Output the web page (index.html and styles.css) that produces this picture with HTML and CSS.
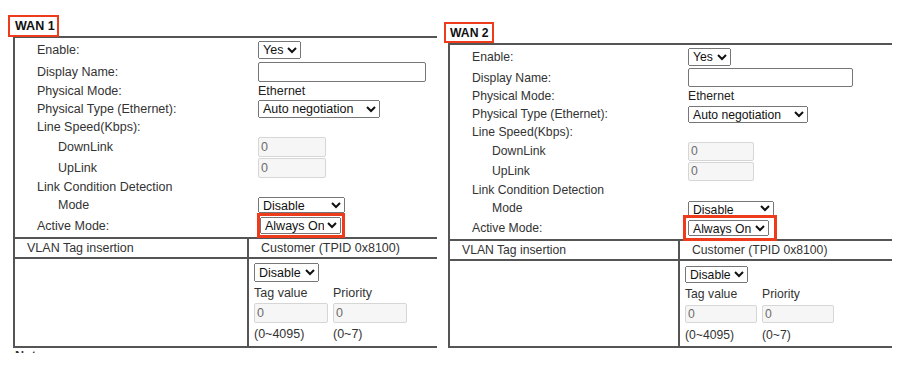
FILE: index.html
```html
<!DOCTYPE html>
<html lang="en">
<head>
<meta charset="utf-8">
<title>WAN settings</title>
<link rel="stylesheet" href="styles.css">
</head>
<body>
<div class="page">
  <section class="wan wan--1">
    <div class="wan-title">WAN 1</div>
    <div class="wan-table">
      <div class="settings">
        <div class="row r1"><span class="lbl">Enable:</span><span class="val"><select class="sel sel-yes"><option>Yes</option></select></span></div>
        <div class="row r2"><span class="lbl">Display Name:</span><span class="val"><input class="txt txt-name" type="text"></span></div>
        <div class="row r3"><span class="lbl">Physical Mode:</span><span class="val">Ethernet</span></div>
        <div class="row r4"><span class="lbl">Physical Type (Ethernet):</span><span class="val"><select class="sel sel-phys"><option>Auto negotiation</option></select></span></div>
        <div class="row r5"><span class="lbl">Line Speed(Kbps):</span></div>
        <div class="row r6"><span class="lbl ind">DownLink</span><span class="val"><input class="txt txt-speed" type="text" value="0" disabled></span></div>
        <div class="row r7"><span class="lbl ind">UpLink</span><span class="val"><input class="txt txt-speed" type="text" value="0" disabled></span></div>
        <div class="row r8"><span class="lbl">Link Condition Detection</span></div>
        <div class="row r9"><span class="lbl ind">Mode</span><span class="val"><select class="sel sel-mode"><option>Disable</option></select></span></div>
        <div class="row r10"><span class="lbl">Active Mode:</span><span class="val"><span class="hl"><select class="sel sel-active"><option>Always On</option></select></span></span></div>
      </div>
      <div class="vlan vlan-head">
        <div class="vcell vcell-l">VLAN Tag insertion</div>
        <div class="vcell vcell-r">Customer (TPID 0x8100)</div>
      </div>
      <div class="vlan vlan-body">
        <div class="vcell vcell-l"></div>
        <div class="vcell vcell-r">
          <div class="tag-grid">
            <div class="tg-sel"><select class="sel sel-vlan"><option>Disable</option></select></div>
            <div class="tg-lbl">Tag value</div>
            <div class="tg-lbl">Priority</div>
            <div class="tg-in"><input class="txt txt-tag" type="text" value="0" disabled></div>
            <div class="tg-in"><input class="txt txt-tag" type="text" value="0" disabled></div>
            <div class="tg-range">(0~4095)</div>
            <div class="tg-range">(0~7)</div>
          </div>
        </div>
      </div>
    </div>
    <div class="note">Note:</div>
  </section>

  <section class="wan wan--2">
    <div class="wan-title">WAN 2</div>
    <div class="wan-table">
      <div class="settings">
        <div class="row r1"><span class="lbl">Enable:</span><span class="val"><select class="sel sel-yes"><option>Yes</option></select></span></div>
        <div class="row r2"><span class="lbl">Display Name:</span><span class="val"><input class="txt txt-name" type="text"></span></div>
        <div class="row r3"><span class="lbl">Physical Mode:</span><span class="val">Ethernet</span></div>
        <div class="row r4"><span class="lbl">Physical Type (Ethernet):</span><span class="val"><select class="sel sel-phys"><option>Auto negotiation</option></select></span></div>
        <div class="row r5"><span class="lbl">Line Speed(Kbps):</span></div>
        <div class="row r6"><span class="lbl ind">DownLink</span><span class="val"><input class="txt txt-speed" type="text" value="0" disabled></span></div>
        <div class="row r7"><span class="lbl ind">UpLink</span><span class="val"><input class="txt txt-speed" type="text" value="0" disabled></span></div>
        <div class="row r8"><span class="lbl">Link Condition Detection</span></div>
        <div class="row r9"><span class="lbl ind">Mode</span><span class="val"><select class="sel sel-mode"><option>Disable</option></select></span></div>
        <div class="row r10"><span class="lbl">Active Mode:</span><span class="val"><span class="hl"><select class="sel sel-active"><option>Always On</option></select></span></span></div>
      </div>
      <div class="vlan vlan-head">
        <div class="vcell vcell-l">VLAN Tag insertion</div>
        <div class="vcell vcell-r">Customer (TPID 0x8100)</div>
      </div>
      <div class="vlan vlan-body">
        <div class="vcell vcell-l"></div>
        <div class="vcell vcell-r">
          <div class="tag-grid">
            <div class="tg-sel"><select class="sel sel-vlan"><option>Disable</option></select></div>
            <div class="tg-lbl">Tag value</div>
            <div class="tg-lbl">Priority</div>
            <div class="tg-in"><input class="txt txt-tag" type="text" value="0" disabled></div>
            <div class="tg-in"><input class="txt txt-tag" type="text" value="0" disabled></div>
            <div class="tg-range">(0~4095)</div>
            <div class="tg-range">(0~7)</div>
          </div>
        </div>
      </div>
    </div>
  </section>
</div>
</body>
</html>
```

FILE: styles.css
```css
* { box-sizing: border-box; }

body {
  margin: 0;
  background: #fff;
  font-family: "Liberation Sans", Arial, sans-serif;
  color: #333;
}

.page {
  display: flex;
  align-items: flex-start;
}

.wan { line-height: 14px; }

.wan--1 {
  margin-left: 8px;
  width: 429px;
  padding-top: 15px;
  font-size: 12.5px;
  --r1: 24px; --r2: 20px; --r3: 18px; --r4: 18px; --r5: 18px;
  --r6: 21px; --r7: 21px; --r8: 18px; --r9: 18px; --r10: 23px;
}

.wan--2 {
  margin-left: 7px;
  width: 449px;
  padding-top: 22px;
  font-size: 12.2px;
  --r1: 23px; --r2: 19px; --r3: 18px; --r4: 18px; --r5: 18px;
  --r6: 20px; --r7: 20px; --r8: 18px; --r9: 18px; --r10: 22px;
}

/* title with red annotation frame */
.wan-title {
  position: relative;
  z-index: 1;
  display: flex;
  align-items: center;
  border: 2px solid #ee3b1b;
  background: #fff;
  color: #111;
  font-weight: bold;
}
.wan--1 .wan-title { width: 51px; height: 22px; padding-left: 5px; }
.wan--2 .wan-title { width: 50px; height: 21px; padding-left: 4px; }

/* table */
.wan-table {
  border: 2px solid #555;
  border-right: none;
}
.wan--1 .wan-table { margin-left: 5px; margin-top: -1px; width: 424px; }
.wan--2 .wan-table { margin-left: 4px; width: 444px; }

.settings { border-bottom: 2px solid #555; }

.row { display: flex; align-items: center; }
.r1 { height: var(--r1); }
.r2 { height: var(--r2); }
.r3 { height: var(--r3); }
.r4 { height: var(--r4); }
.r5 { height: var(--r5); }
.r6 { height: var(--r6); }
.r7 { height: var(--r7); }
.r8 { height: var(--r8); }
.r9 { height: var(--r9); }
.r10 { height: var(--r10); }

.lbl { flex: none; padding-left: 22px; white-space: nowrap; }
.wan--1 .lbl { width: 243px; }
.wan--2 .lbl { width: 238px; }
.wan--1 .lbl.ind { padding-left: 43px; }
.wan--2 .lbl.ind { padding-left: 42px; }

.val { display: flex; align-items: center; color: #222; }

/* controls */
.sel {
  font-family: inherit;
  font-size: inherit;
  color: #111;
  margin: 0;
}

.txt {
  font-family: inherit;
  font-size: inherit;
  margin: 0;
  padding: 1px 2px;
  border: 1px solid #767676;
  border-radius: 2px;
  background: #fff;
  color: #222;
}
.txt:disabled {
  background: #f6f6f6;
  border-color: #d6d6d6;
  color: #6d6d6d;
}

.wan--1 .sel-yes { width: 43px; height: 18px; }
.wan--1 .txt-name { width: 168px; height: 20px; }
.wan--1 .sel-phys { width: 122px; height: 18px; }
.wan--1 .txt-speed { width: 68px; height: 20px; }
.wan--1 .sel-mode { width: 87px; height: 16px; }
.wan--1 .sel-active { width: 81px; height: 17px; }
.wan--1 .sel-vlan { width: 65px; height: 19px; }
.wan--1 .txt-tag { width: 74px; height: 20px; }

.wan--2 .sel-yes { width: 43px; height: 18px; }
.wan--2 .txt-name { width: 165px; height: 19px; }
.wan--2 .sel-phys { width: 120px; height: 17px; }
.wan--2 .txt-speed { width: 66px; height: 19px; }
.wan--2 .sel-mode { width: 86px; height: 15px; }
.wan--2 .sel-active { width: 81px; height: 16px; }
.wan--2 .sel-vlan { width: 63px; height: 17px; }
.wan--2 .txt-tag { width: 72px; height: 18px; }

/* red annotation around Active Mode select */
.hl {
  display: inline-flex;
  border: 3px solid #ee3b1b;
}
.wan--1 .hl { margin-left: -1px; padding: 1px 1px 1px 0; }
.wan--2 .hl { margin-left: -5px; padding: 2px 5px 2px 2px; }

/* VLAN section */
.vlan { display: grid; }
.wan--1 .vlan { grid-template-columns: 234px 1fr; }
.wan--2 .vlan { grid-template-columns: 230px 1fr; }

.vlan-head { border-bottom: 2px solid #555; height: 20px; }
.vlan-head .vcell { display: flex; align-items: center; padding-left: 12px; }
.vcell-l { border-right: 2px solid #555; }

.wan--1 .vlan-body { height: 87px; }
.wan--2 .vlan-body { height: 85px; }

.vlan-body .vcell-r { padding-left: 5px; }
.wan--1 .vlan-body .vcell-r { padding-top: 4px; }
.wan--2 .vlan-body .vcell-r { padding-top: 5px; }

.tag-grid { display: grid; }
.wan--1 .tag-grid { grid-template-columns: 79px 1fr; grid-template-rows: 19px 21px 20px 22px; }
.wan--2 .tag-grid { grid-template-columns: 77px 1fr; grid-template-rows: 17px 22px 18px 23px; }

.tg-sel { grid-column: 1 / span 2; display: flex; }
.tg-lbl, .tg-range { display: flex; align-items: center; }
.tg-in { display: flex; }

/* footnote, cut off by the bottom edge of the original capture */
.note {
  margin-left: 7px;
  margin-top: 2px;
  height: 3px;
  overflow: hidden;
  font-weight: bold;
  line-height: 12px;
  color: #333;
}
```
